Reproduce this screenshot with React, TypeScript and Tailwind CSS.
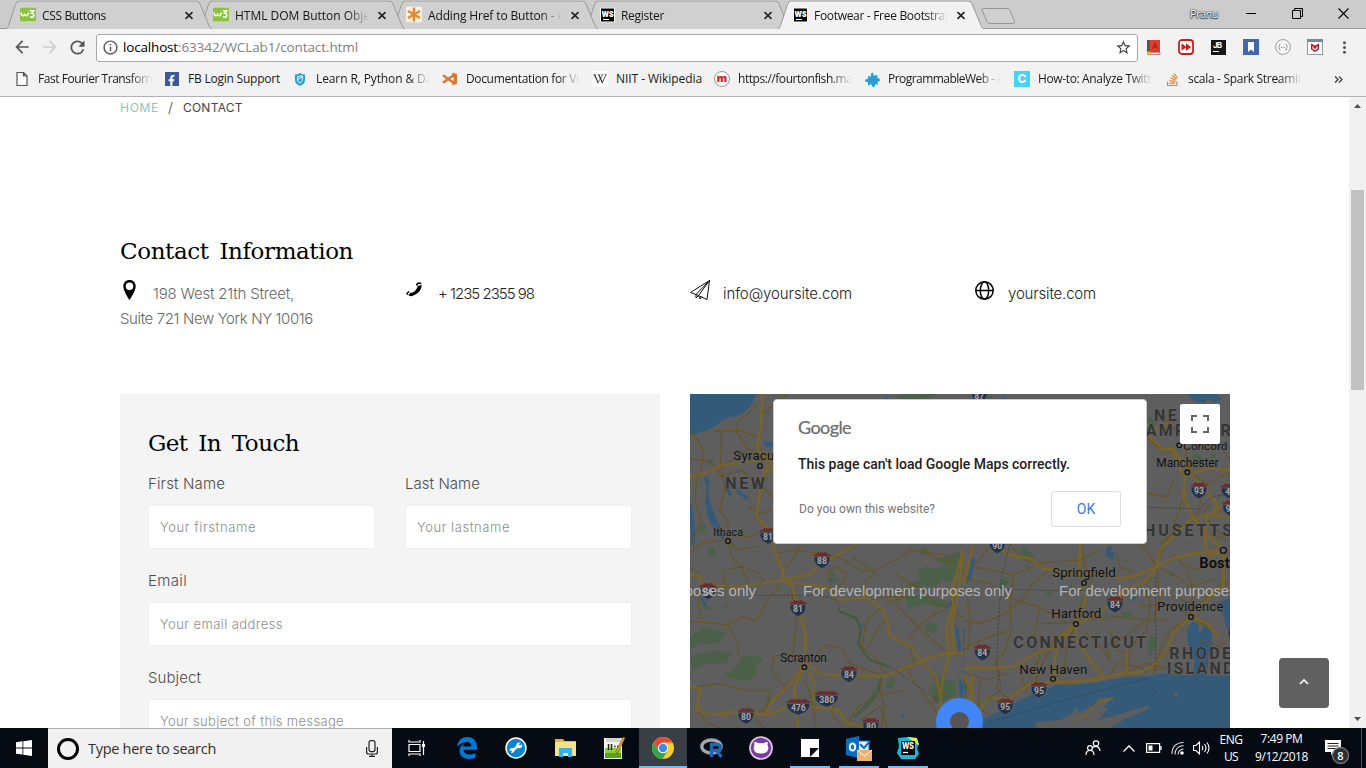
import { useLayoutEffect, useRef, useState } from "react";
import type { ReactNode } from "react";
import { FaFacebookF, FaGithubAlt, FaStackOverflow, FaWikipediaW } from "react-icons/fa";
import { MdArrowBack, MdArrowForward, MdInfoOutline, MdMoreVert, MdRefresh, MdStarBorder } from "react-icons/md";

/** Text that spreads its letters so that the run takes exactly `w` pixels. */
function Fit({ w, children, className = "" }: { w: number; children: string; className?: string }) {
  const ref = useRef<HTMLSpanElement>(null);
  const [spacing, setSpacing] = useState(0);
  useLayoutEffect(() => {
    const el = ref.current;
    if (el) setSpacing((w - el.getBoundingClientRect().width) / children.length);
  }, [w, children]);
  return (
    <span ref={ref} className={`inline-block shrink-0 whitespace-pre ${className}`} style={{ letterSpacing: spacing }}>
      {children}
    </span>
  );
}

const Faded = ({ children, className }: { children: ReactNode; className: string }) => (
  <div className={`flex shrink-0 items-center overflow-hidden [mask-image:linear-gradient(to_right,black_calc(100%-22px),transparent)] ${className}`}>
    {children}
  </div>
);

const W3 = () => (
  <svg width="16" height="14" viewBox="0 0 16 14">
    <rect width="16" height="14" rx="1" fill="#8ac43f" />
    <path d="M1 5q.3 3.300 2 3.300Q4.300 8.300 4.500 6q.3 2.300 1.800 2.300Q8 8.300 8.300 5M9.800 3.200h4l-2.300 2.600q2.500 0 2.300 2.300-.3 2.700-3.800 1.200" fill="none" stroke="#fff" strokeWidth="1.500" />
  </svg>
);

const Asterisk = () => (
  <svg width="16" height="16" viewBox="0 0 16 16">
    <rect width="16" height="16" fill="#fdf0e2" />
    <path d="M8 1v14M2 4.500l12 7M14 4.500l-12 7" stroke="#e8882a" strokeWidth="2.400" />
  </svg>
);

const WS = () => (
  <svg width="15" height="15" viewBox="0 0 15 15">
    <path d="M.5.500h14v14H.5z" fill="#000" stroke="#fff" />
    <text x="1.500" y="9" fontSize="8" fontWeight="900" fontFamily="Inter, sans-serif" textLength="12" lengthAdjust="spacingAndGlyphs" fill="#fff">WS</text>
    <path d="M3 12h6" stroke="#fff" strokeWidth="1.200" />
  </svg>
);

const tabs = [
  { title: "CSS Buttons", w: 64, icon: <W3 /> },
  { title: "HTML DOM Button Object", w: 145, icon: <W3 /> },
  { title: "Adding Href to Button - Co", w: 144, icon: <Asterisk /> },
  { title: "Register", w: 43, icon: <WS /> },
  { title: "Footwear - Free Bootstrap", w: 138, icon: <WS /> },
];

function Tab({ title, w, icon, index }: { title: string; w: number; icon: ReactNode; index: number }) {
  const active = index === 4;
  const layer = ["z-[5]", "z-[4]", "z-[3]", "z-[2]", "z-[6]"][index];
  return (
    <div className={`relative flex h-[29px] w-[193px] shrink-0 items-center pl-[14px] ${layer}`}>
      <svg className="absolute left-0 top-0" width="208" height="29" viewBox="0 0 208 29">
        <path
          d="M0 28.500Q1.500 28 2.500 25L9.500 4Q10.500 .5 13 .5H190Q193 .5 194 3.500L203 25Q204 28 206 28.500"
          fill={active ? "#f2f2f2" : "#d0d0d0"}
          stroke="#989898"
        />
      </svg>
      <span className="relative flex w-[16px] justify-center">{icon}</span>
      <Faded className="relative ml-[6px] h-[20px] w-[134px]">
        <Fit w={w} className="text-[12px] leading-[19px] text-[#141414]">{title}</Fit>
      </Faded>
      <svg className="relative ml-[9px] mt-px" width="8" height="8" viewBox="0 0 8 8">
        <path d="M.5.5l7 7M7.500.5l-7 7" stroke="#222" strokeWidth="1.700" />
      </svg>
    </div>
  );
}

const TitleBar = () => (
  <div className="flex h-[29px] shrink-0 items-center border-b border-[#989898] bg-[#ccc] pl-[6px]">
    <div className="flex h-[29px] translate-y-[0.5px]">
      {tabs.map((t, i) => (
        <Tab key={t.title} {...t} index={i} />
      ))}
    </div>
    <svg className="ml-[10px] mt-[3px]" width="36" height="18" viewBox="0 0 36 18">
      <path d="M1.500 1.500H26q2 0 3 2l4.500 11q.7 2-1.500 2H9q-2 0-3-2L1 3q-.5-1.500.5-1.500z" fill="#d0d0d0" stroke="#989898" />
    </svg>
    <Fit w={28} className="ml-[173px] text-[11px] leading-[16px] text-white [text-shadow:0_0_2px_#222,0_0_1px_#222,0_1px_1px_#333]">Pranu</Fit>
    <svg className="ml-[28px]" width="11" height="11" viewBox="0 0 11 11"><path d="M0 4.500h10" stroke="#000" /></svg>
    <svg className="ml-[35px] -mt-[2px]" width="11" height="11" viewBox="0 0 11 11">
      <path d="M.5 2.500h8v8h-8zM2.500 2.500v-2h8v8h-2" fill="none" stroke="#000" />
    </svg>
    <svg className="ml-[35px] -mt-[2px]" width="11" height="11" viewBox="0 0 11 11"><path d="M.5.500l10 10M10.500.5l-10 10" stroke="#000" strokeWidth="1.100" /></svg>
  </div>
);

const Extensions = () => (
  <div className="flex items-center">
    <svg className="ml-[8px]" width="15" height="17" viewBox="0 0 15 17">
      <path d="M1 1h3v14H1z" fill="#555" /><path d="M4 1h10v12H4z" fill="#e03d30" /><path d="M4 13.500h10v2H4z" fill="#fff" stroke="#a33" strokeWidth=".6" />
      <path d="M6.500 10L9 4l2.500 6M7.500 8h3" stroke="#a8201a" strokeWidth="1.200" fill="none" /><path d="M1 13l3-1 1 3-2 1.500-2-.5z" fill="#f3b51b" />
    </svg>
    <svg className="ml-[17px]" width="16" height="16" viewBox="0 0 16 16">
      <rect x="1" y="1" width="14" height="14" rx="3" fill="#fff" stroke="#c7201d" strokeWidth="1.800" />
      <path d="M3.500 4.200L8.500 8l-5 3.800zM8 4.200L13 8l-5 3.800z" fill="#c7201d" />
    </svg>
    <span className="ml-[17px] flex h-[15px] w-[15px] flex-col bg-[#161616] pl-[2px] pt-px font-[Inter,sans-serif] text-[8px] font-bold leading-[8px] text-white">
      <Fit w={11}>JB</Fit><span className="mt-[2px] h-px w-[6px] bg-white" />
    </span>
    <svg className="ml-[17px]" width="16" height="16" viewBox="0 0 16 16"><rect width="16" height="16" fill="#4267b2" /><path d="M5 3h6v10l-3-2.500L5 13z" fill="#fff" /></svg>
    <svg className="ml-[16px]" width="16" height="16" viewBox="0 0 16 16" fill="none" stroke="#999">
      <circle cx="8" cy="8" r="7.400" fill="#fafafa" />
      <path d="M5.500 5Q4.500 5 4.500 6T3.500 8Q4.500 8 4.500 10T5.500 11M10.500 5q1 0 1 1t1 2q-1 0-1 2t-1 1" /><path d="M6 8.500h4" strokeDasharray="1 .6" />
    </svg>
    <svg className="ml-[16px]" width="16" height="16" viewBox="0 0 16 16">
      <rect x=".5" y=".5" width="15" height="15" fill="#fff" stroke="#8b9aa0" /><path d="M0 0h16v3H0z" fill="#6e8e99" />
      <path d="M4 4.500l4 2 4-2v6L8 13l-4-2.500z" fill="#c3192b" /><path d="M6 7.500v2l2 1 2-1v-2" stroke="#fff" strokeWidth="1.200" fill="none" />
    </svg>
    <MdMoreVert className="ml-[12px]" size={19} color="#5a5a5a" />
  </div>
);

const Toolbar = () => (
  <div className="flex h-[36px] shrink-0 items-center bg-[#f2f2f2] pl-[12px]">
    <MdArrowBack size={20} color="#555" />
    <MdArrowForward className="ml-[8px]" size={20} color="#ccc" />
    <MdRefresh className="ml-[7px]" size={21} color="#555" />
    <div className="ml-[8px] mt-[1px] flex h-[28px] w-[1042px] shrink-0 items-center rounded-[3px] border border-[#a8a8a8] bg-white pl-[5px]">
      <MdInfoOutline size={17} color="#555" />
      <Fit w={55} className="ml-[4px] pb-px text-[13.500px] leading-[18px] text-black">localhost</Fit>
      <Fit w={180} className="pb-px text-[13.500px] leading-[18px] text-[#808080]">:63342/WCLab1/contact.html</Fit>
      <MdStarBorder className="ml-auto mr-[5px]" size={17} color="#444" />
    </div>
    <Extensions />
  </div>
);

const bookmarks: { label: string; w: number; icon: ReactNode; pl: string; box: string; fade?: boolean }[] = [
  { label: "Fast Fourier Transform", w: 118, pl: "w-[150px]", box: "w-[114px]", fade: true, icon: <svg width="12" height="14" viewBox="0 0 12 14"><path d="M1 .5h6.500L11 4v9.500H1zM7.500.5V4H11" fill="#fff" stroke="#555" strokeWidth="1.200" /></svg> },
  { label: "FB Login Support", w: 92, pl: "w-[128px]", box: "w-[94px]", icon: <span className="flex h-[14px] w-[14px] items-end justify-end bg-[#3b5998] pr-[2px]"><FaFacebookF size={11} color="#fff" /></span> },
  { label: "Learn R, Python & Data", w: 127, pl: "w-[150px]", box: "w-[114px]", fade: true, icon: <svg width="12" height="13" viewBox="0 0 13 14"><path d="M6.500 0Q9 2 12 1.500V7q0 5-5.500 7Q1 12 1 7V1.500Q4 2 6.500 0z" fill="#27a4cf" /><path d="M4 4l5-1v5l-2.500 3L4 9zM4 7l5-3" stroke="#fff" fill="none" /></svg> },
  { label: "Documentation for Visual", w: 134, pl: "w-[150px]", box: "w-[114px]", fade: true, icon: <svg width="17" height="16" viewBox="0 0 17 16"><path d="M1 4l12 8.500M1 12L13 3.500" stroke="#dc7433" strokeWidth="2.500" /><path d="M11 1l5 2v10l-5 2z" fill="#dc7433" /><path d="M12.500 5.500L9.500 8l3 2.500z" fill="#f2f2f2" /></svg> },
  { label: "NIIT - Wikipedia", w: 86, pl: "w-[122px]", box: "w-[88px]", icon: <span className="flex h-[16px] w-[16px] items-center justify-center rounded-[3px] bg-white"><FaWikipediaW size={14} color="#222" /></span> },
  { label: "https://fourtonfish.matt", w: 122, pl: "w-[150px]", box: "w-[114px]", fade: true, icon: <span className="flex h-[16px] w-[16px] items-center justify-center rounded-full border border-[#999] bg-white pb-px font-[Inter,sans-serif] text-[11px] font-black leading-none text-[#e01f25]">m</span> },
  { label: "ProgrammableWeb - A", w: 116, pl: "w-[150px]", box: "w-[112px]", fade: true, icon: <svg width="15" height="15" viewBox="0 0 15 15"><path d="M3 4l3 .5Q5.500 1 7.500.5 9 1 8.500 4L12 2.500l.5 3.500Q15 6 15 8t-2.500 1.500L13 13l-3-1q.3 3-1.500 3T6.500 12L3 13.500V10Q0 10.500 0 8.500T3 7z" fill="#2b9fd4" /></svg> },
  { label: "How-to: Analyze Twitter", w: 124, pl: "w-[150px]", box: "w-[114px]", fade: true, icon: <span className="flex h-[16px] w-[16px] items-center justify-center bg-[#44d3fa] font-[Inter,sans-serif] text-[12px] font-extrabold leading-none text-white">C</span> },
  { label: "scala - Spark Streaming", w: 123, pl: "w-[150px]", box: "w-[114px]", fade: true, icon: <FaStackOverflow size={15} color="#e8812e" /> },
];

const Bookmarks = () => (
  <div className="flex h-[32px] shrink-0 items-center border-b border-[#b2b2b2] bg-[#f2f2f2] pb-[4px] pl-[14px] pt-px text-[12px] leading-[18px] text-[#1a1a1a]">
    {bookmarks.map((b) => (
      <div key={b.label} className={`flex shrink-0 items-center ${b.pl}`}>
        <span className="mr-[8px] flex w-[16px] shrink-0 items-center justify-center">{b.icon}</span>
        {b.fade ? <Faded className={`h-[18px] ${b.box}`}><Fit w={b.w}>{b.label}</Fit></Faded> : <Fit w={b.w}>{b.label}</Fit>}
      </div>
    ))}
    <svg className="ml-[20px] mt-px" width="9" height="7" viewBox="0 0 9 7"><path d="M1 .5l3 3-3 3M5 .5l3 3-3 3" fill="none" stroke="#444" strokeWidth="1.400" /></svg>
  </div>
);

function Shield({ x, y, n }: { x: number; y: number; n: string }) {
  const wide = n.length > 2;
  const h = wide ? 35 : 24;
  return (
    <g transform={`translate(${x} ${y})`}>
      <path d={`M${-h} -18q8 4 12-6q12 5 ${h - 12} 0q${h - 24} 5 ${h - 12} 0q4 10 12 6v12h${-2 * h}z`} fill="#682e2d" />
      <path d={`M${-h} -10H${h}Q${h + 3} 14 0 26Q${-h - 3} 14 ${-h} -10z`} fill="#25324a" stroke="#6a6a6a" strokeWidth="2" />
      <text y="12" textAnchor="middle" fontSize="26" fontWeight="700" fill="#a8a8a8">{n}</text>
    </g>
  );
}

function City({ x, y, w, t, s = 40, dx, dy, bold }: { x: number; y: number; w: number; t: string; s?: number; dx: number; dy: number; bold?: boolean }) {
  return (
    <g>
      <text x={x} y={y} fontSize={s} textLength={w} fontWeight={bold ? 700 : 400} fill="#0f0f0f" stroke="#666" strokeWidth="3" paintOrder="stroke">{t}</text>
      <circle cx={dx} cy={dy} r={bold ? 9 : 7} fill="#666" stroke="#111" strokeWidth="4" />
    </g>
  );
}

const Region = ({ x, y, w, t }: { x: number; y: number; w: number; t: string }) => (
  <text x={x} y={y} fontSize="48" fontWeight="700" textLength={w} fill="#343434" stroke="#686868" strokeWidth="3" paintOrder="stroke">{t}</text>
);

const WestHalf = () => (
  <g transform="translate(-2 -4) scale(.33333)">
    <g fill="#335a78">
      <path d="M0 12H203L196 38Q168 78 135 80Q110 82 90 102Q60 122 38 126L0 137z" />
      <path d="M48 265l12-4 4 15-3 44 10 30 20 50 20 42-8 8-26-32-18-40-8-48 6-30zM4 340l8 2 5 50 6 40-4 40-8-10-4-60-4-30zM105 275l12 4 14 34-6 6-14-20zM140 285l14 14 28 24-6 8-28-22zM225 152l30 4v14l-22 0zM800 700l12 20 8 60-6 20-8-50zM812 860l14 20v60l-12-30z" />
      <path d="M590 20l12 6-14 8zM520 700l8 6-6 10zM768 650l30-25 15 4-38 28zM35 622l12 4 12 28-14-8zM425 565l14 5-10 10zM640 970l8 4-3 15zM80 120l10 2v12z" />
    </g>
    <g fill="#4b6048">
      <path d="M688 545l28-18 20 12 34-8 34 20-12 24-36-5-14 22-38-8-34 16-12-22 36-6zM745 510l28-12 52 20v35l-35-12zM655 620l50-8 70 20-12 22-50-12-55 14zM708 708l20-10 22 8-8 22-30-4zM5 740l45-30 65 20-20 28-55 5-35 15zM8 800l70-20 52 10-15 30-60 0-44 22zM110 850l30-10 20-40 50-5 14 16-24 20 10 16-34 28-52-10zM40 640l30 14-14 8zM56 480l22-10 4 20-16 10zM35 410l16-6 2 20-16 8zM55 215l22-10-6 20zM725 895l30-30 45 8 6 40-40 20-24 8zM495 985l45-55 40-70 4 24-34 60-46 40zM595 880l18-18 12 14-12 18-20 0zM620 20l50-8h80l-30 14-70 2zM700 470l20 8-10 20-16-8zM780 500l30-18 20 10v30z" />
      <path d="M110 640l20 10-30 8zM240 905l18 30-25 12zM420 540l20 5 12 30-12 8z" opacity=".7" />
      <path d="M455 665L505 685 520 720 510 760 545 810 605 830" fill="none" stroke="#4b6048" strokeWidth="9" />
    </g>
    <g fill="none" stroke="#67551f" strokeWidth="3.500" strokeLinejoin="round">
      <path d="M205 42L180 72 150 95 145 125 200 205M84 122H160L220 145M100 125L98 220 110 300 95 360 120 395 120 450M0 205L70 215 100 260 160 240 190 265 215 300M10 120L48 185 40 240 25 275 22 330 40 400 0 475M120 450L40 460 0 490M120 450L150 480 205 470M120 450L130 500 160 530 180 575M105 540L165 530 215 552 230 575M105 540L112 590 150 605M40 590L30 640 40 690M0 695L90 700 120 705 165 680 205 695 240 625 275 590M310 600L325 690 315 800M300 12L225 70M262 490L320 480 400 490 470 510 520 545 560 540 630 505 670 480 800 500M285 545L320 500 335 470M430 600L420 550 440 530 475 550 470 575 430 600M530 620L525 580 560 550 520 520 490 500M580 650L535 690 522 770 560 800 590 850M620 550L660 575 650 620 590 640M825 600L770 650 740 640 700 590 660 580M825 680L760 660 700 700 660 750M780 790L700 720 620 640M590 690L560 730 540 775M670 770L670 800 690 825M380 820L385 790 420 765 465 780 485 820 520 835 580 855M350 820L300 790 255 800 250 840 280 880 300 890M580 860L575 900 590 950 580 1014M660 830L675 870 720 930 760 990M700 810L735 850 755 900 730 940M600 1014L575 950 520 990M350 870L370 920 385 1014M440 930L430 970 470 1014M25 960L60 1000 100 1014M200 985L230 1014M120 705L150 760 150 800M0 530L35 550M180 350L215 370 250 360M225 180L180 180 100 230M545 630L600 620 665 620M700 470L730 500 800 520M225 290L255 320M240 420L180 440 150 440M30 890L90 880 170 900 250 900M250 910L230 960 170 985M480 1000L510 950 560 920 650 900" />
    </g>
    <g fill="none" stroke="#78642b" strokeWidth="8" strokeLinejoin="round" strokeLinecap="round">
      <path d="M225 12L217 120 207 175 238 225 218 300 205 380 240 420 262 490 286 545 282 570 310 585 330 640 345 700 353 745 350 820" />
      <path d="M0 260L50 248 100 226 185 215 260 200M225 190L260 235 230 250 215 280M282 570L370 550 402 520 500 465M0 555L38 560 42 580 150 592 195 584 280 572 340 580 415 592 450 632 490 625 535 622 580 655 600 695 600 735 670 770 700 815 745 860 755 910" strokeWidth="7" />
      <path d="M350 820L400 852 440 856 500 855 585 860 660 830 720 805 780 790 825 790M0 888L38 898 25 960 70 974 170 965 240 975 300 950 360 950 450 960 480 1000 570 1014M350 820L300 890 255 930 230 975M365 850L380 890 375 930M350 830L320 890 325 960 330 1014" />
      <path d="M828 470L795 590 795 650 775 710 785 790 765 860 755 960M828 480L805 640 790 710 800 790" />
    </g>
    <path d="M200 616H400L450 632 455 665 505 685 520 720 510 760 545 810 605 830 750 930M580 860L570 910 500 980" fill="none" stroke="#363636" strokeWidth="2" strokeDasharray="7 5" />
    <Shield x={240} y={437} n="81" /><Shield x={402} y={510} n="88" /><Shield x={60} y={603} n="86" />
    <Shield x={330} y={654} n="81" /><Shield x={483} y={852} n="84" /><Shield x={174} y={977} n="80" />
    <Shield x={331} y={950} n="476" /><Shield x={416} y={926} n="380" /><Shield x={549} y={1007} n="80" />
    <City x={136} y={209} w={166} t="Syracuse" dx={216} dy={228} />
    <City x={76} y={438} w={89} t="Ithaca" s={32} dx={120} dy={453} />
    <City x={277} y={816} w={140} t="Scranton" s={36} dx={349} dy={832} />
    <Region x={112} y={298} w={118} t="NEW" />
  </g>
);

const EastHalf = () => (
  <g transform="translate(270 -4) scale(.33333)">
    <g fill="#335a78">
      <path d="M12 1014L40 1000 70 988 125 960 195 925 240 905 290 885 340 884 400 880 445 870 500 862 570 858 620 850 700 858 830 855V1014z" />
      <path d="M680 720l18-25 16 10 4 30 12-25 16-10 8 30 4 50-12 10-6 70-45 0 10-45-16-24zM680 12l24 22 30 4 10-14 22 14 20-10-18-16zM440 475l15-10-2 22 14 0-8 22-20-10zM770 640l40-15v80l-10 10-10-40zM0 700l14 20-4 90 12 80-10 20zM35 500l12 10-14 60-14 10 12-50zM515 620l14 0-8 20zM330 580l10 15-8 10zM790 340l10 10-10 20zM120 30l14-12-4 18z" />
    </g>
    <g fill="#5e5e5e">
      <path d="M225 1014L228 995 300 990 330 975 345 960 352 950 358 970 385 955 380 945 398 950 415 925 460 922 430 950 445 955 415 990 470 975 520 960 570 945 560 960 500 985 450 1014zM640 918l8-20 8 22zM412 950l14-12 8 8-12 20z" />
    </g>
    <g fill="#4b6048">
      <path d="M565 80l14 5 10 30-12 5-12-15zM695 200l15-12 14 16 14 4-18 20-14-10zM180 490l14-20 28 25-4 20-20 5zM190 520l22 10-4 16zM575 735l15 10v30l-16 10-14-14zM562 780l14 5-6 14zM635 850l20-5-4 20zM120 570l16-10 10 20-16 18-12-5zM488 665l28 5-10 14-18-4zM75 18l14-8 10 20zM750 190l18 4-10 20zM255 605l20 0-10 16zM155 745l12 5-8 15zM490 510l16-6 4 14zM625 545l20 6-12 12zM225 810l14 6-10 8z" />
    </g>
    <g fill="none" stroke="#67551f" strokeWidth="3.500" strokeLinejoin="round">
      <path d="M150 462L180 500 230 520 290 515 360 510 420 480M90 470L40 530 110 545 160 555 220 530M0 540L30 570 90 580 140 620 200 640 240 650 320 700M0 690L60 700 120 680 175 640 220 580 270 540M240 650L225 720 220 770 240 800 210 860M160 555L150 640 155 720 130 790 95 840M0 790L40 760 90 740 150 720M140 850L80 870 20 850M347 702L280 750 260 800 230 850 230 880M347 702L320 770 310 850 280 865M370 720L430 780 450 810 440 770 480 750 560 690 620 690M450 720L470 780 510 800 500 860M560 580L570 650 560 720 520 760 500 800M590 530L560 480 540 462M590 530L610 470 640 420M590 530L600 620 580 690M590 530L650 560 690 590 760 570M640 490L680 540 700 600 690 680M580 565L500 600 440 640M700 380L640 430 600 460M700 390L740 430 800 450M640 410L650 380 670 320M560 140L600 180 650 190M610 70L630 110 660 130M720 160L780 170 825 230M690 250L740 280 825 240M740 280L720 340 710 380M640 270L620 320 560 310M670 130L680 200 690 250M750 340L730 370 760 410 790 440M660 520L720 540 790 510 825 480M825 570L770 590 740 620 700 680M692 680L650 650 600 640 540 650M692 680L630 720 600 780 580 850M692 680L740 710 780 740M825 730L780 770 720 750M640 840L560 820 500 850M560 850L540 830 470 820 450 860M20 600L30 700 25 780M0 830L20 900 0 960M60 870L55 950 80 970M120 840L110 890 140 925M520 545L480 530 470 490M400 560L360 650 347 702M360 462L375 510 370 580M240 700L320 700 380 690 470 680 560 690M180 850L200 900M560 620L620 610 690 640" />
    </g>
    <g fill="none" stroke="#78642b" strokeWidth="8" strokeLinejoin="round" strokeLinecap="round">
      <path d="M110 470L150 495 210 505 250 535 300 545 370 555 420 550 480 565 520 560 590 530 640 505 700 490 790 482" />
      <path d="M360 462L358 530 372 580 375 640 347 702 300 740 285 800 280 865M347 702L390 685 440 650 500 600 560 570 590 530" />
      <path d="M20 988L60 960 90 920 140 930 175 905 215 880 280 875 350 875 430 865 480 850 540 848 590 820 620 780 640 730 692 680 740 630 790 590 790 490" />
      <path d="M0 840L45 830 75 835 160 830 230 790 290 770 347 702M347 702L350 750 390 810 430 860M500 790L500 850M620 100L600 120 560 105M640 190L660 240 675 260 670 320 690 360 700 385 750 440 790 480M690 250L735 300 770 340 760 370 690 390 600 480 590 530M760 370L790 340 825 320M740 380L735 470 750 500 790 482M825 380L750 375M560 130L610 180 645 175M610 178L640 180 690 245M690 250L760 235 825 240M692 680L740 700 775 740M8 850L35 905 25 950 20 1000M0 960L50 980" />
      <path d="M345 990L380 975 410 940 460 925" strokeWidth="6" opacity=".7" />
      <path d="M40 470L20 540 0 620M35 860L40 970" />
    </g>
    <path d="M150 462L125 560 115 700 110 830 125 900 80 930M130 598L290 602 590 598M560 352L720 357 755 320 825 310M587 560L587 850M90 995L280 940 555 866 590 912" fill="none" stroke="#363636" strokeWidth="2" strokeDasharray="7 5" />
    <Shield x={58} y={14} n="87" /><Shield x={112} y={465} n="90" /><Shield x={717} y={301} n="93" />
    <Shield x={818} y={304} n="495" /><Shield x={812} y={354} n="95" /><Shield x={465} y={643} n="84" />
    <Shield x={67} y={787} n="84" /><Shield x={237} y={899} n="95" /><Shield x={136} y={949} n="95" /><Shield x={828} y={732} n="95" />
    <Region x={582} y={92} w={118} t="NEW" />
    <Region x={516} y={139} w={330} t="HAMPSHIRE" />
    <Region x={471} y={438} w={345} t="ACHUSETTS" />
    <Region x={160} y={774} w={398} t="CONNECTICUT" />
    <Region x={628} y={806} w={185} t="RHODE" />
    <Region x={620} y={853} w={200} t="ISLAND" />
    <City x={670} y={181} w={132} t="Concord" s={35} dx={658} dy={166} />
    <City x={589} y={230} w={187} t="Manchester" s={36} dx={682} dy={247} />
    <City x={277} y={561} w={190} t="Springfield" dx={372} dy={579} />
    <City x={274} y={683} w={150} t="Hartford" dx={348} dy={702} />
    <City x={178} y={851} w={204} t="New Haven" dx={279} dy={867} />
    <City x={592} y={662} w={198} t="Providence" s={39} dx={693} dy={681} />
    <City x={718} y={534} w={140} t="Boston" s={44} dx={790} dy={481} bold />
  </g>
);

const MapPanel = () => (
  <div className="relative h-[334px] w-[540px] shrink-0 overflow-hidden bg-[#5e5e5e] font-[Roboto,sans-serif] font-normal">
    <svg width="540" height="334" viewBox="0 0 540 334">
      <EastHalf />
      <svg width="273" height="334" viewBox="0 0 273 334"><rect width="273" height="334" fill="#5e5e5e" /><WestHalf /></svg>
      <g fill="#b4b4b4" fontFamily="Liberation Sans, Arial, sans-serif" fontSize="15">
        <text x="-143" y="202" textLength="209">For development purposes only</text>
        <text x="113" y="202" textLength="209">For development purposes only</text>
        <text x="369" y="202" textLength="209">For development purposes only</text>
      </g>
      <circle cx="269.500" cy="327.500" r="16.500" fill="#555" stroke="#4285f4" strokeWidth="14" />
    </svg>
    <div className="absolute left-[83px] top-[5px] flex h-[145px] w-[374px] flex-col rounded-[4px] border border-[#ccc] bg-white pl-[24px] pr-[25px] pt-[16px]">
      <Fit w={53} className="self-start font-[Lato,sans-serif] text-[18px] leading-[22px] text-[#6b6b6b] [-webkit-text-stroke:0.2px_#6b6b6b]">Google</Fit>
      <Fit w={272} className="mt-[16px] self-start text-[14px] font-medium leading-[20px] text-[#212121]">This page can't load Google Maps correctly.</Fit>
      <div className="mt-[17px] flex items-center justify-between">
        <Fit w={136} className="ml-px text-[12px] leading-[16px] text-[#757575]">Do you own this website?</Fit>
        <button className="flex h-[36px] w-[70px] items-center justify-center rounded-[3px] border border-[#dcdcdc] text-[14px] text-[#3b78e7]">OK</button>
      </div>
    </div>
    <div className="absolute left-[490px] top-[10px] flex h-[40px] w-[40px] items-center justify-center rounded-[2px] bg-white">
      <svg width="18" height="18" viewBox="0 0 18 18"><path d="M1 6V1h5M12 1h5v5M17 12v5h-5M6 17H1v-5" fill="none" stroke="#666" strokeWidth="2" /></svg>
    </div>
  </div>
);

const contacts: { text: string; w: number; dark?: boolean; icon: ReactNode }[] = [
  { text: "198 West 21th Street,", w: 141, icon: <svg width="20" height="20" viewBox="0 0 20 20"><path fillRule="evenodd" d="M9.500 0C5.800 0 3.300 2.700 3.300 6.200 3.300 11 9.500 20 9.500 20S15.700 11 15.700 6.200C15.700 2.700 13.200 0 9.500 0zm0 2.500a3.800 3.800 0 1 1 0 7.600 3.800 3.800 0 0 1 0-7.600z" /></svg> },
  { text: "+ 1235 2355 98", w: 96, dark: true, icon: <svg width="20" height="20" viewBox="0 0 20 20"><path d="M13 5.500q2.500.5 3.500-1 .5 4.500-3.500 8.300-4.500 4-8.200 3.200-1-.2-1.600-1.200 1.800-.3 2.300-2.300 2 .7 4.500-1.600Q12.500 8.500 13 5.500z" /><path d="M11.800 5.500q0-2.500 2.500-2.500 1 0 1.700.8M4.200 11.500l-2.200 1.700q.3 1 .8 1.300" stroke="#000" strokeWidth="1.500" fill="none" /></svg> },
  { text: "info@yoursite.com", w: 129, dark: true, icon: <svg width="20" height="20" viewBox="0 0 20 20"><path d="M19.500.5L.5 12.500l5.500 2L17 19.500zM19.500.5L6 14.500M19.500.5L8.500 15.500M6 14.500V18l2.500-2.500L10 19l2-2.500" fill="none" stroke="#111" /></svg> },
  { text: "yoursite.com", w: 88, dark: true, icon: <svg width="20" height="20" viewBox="0 0 20 20"><g fill="none" stroke="#000" strokeWidth="1.500"><circle cx="9.500" cy="10.500" r="8.700" /><ellipse cx="9.500" cy="10.500" rx="4.200" ry="8.700" /><path d="M.8 10.500h17.400" /></g></svg> },
];

const Field = ({ label, w, hint, hw }: { label: string; w: number; hint: string; hw: number }) => (
  <div className="flex flex-1 flex-col">
    <Fit w={w} className="self-start text-[15px] leading-[20px] text-[#4d4d4d]">{label}</Fit>
    <div className="mt-[11px] flex h-[44px] items-center rounded-[2px] border border-[#f0f0f0] bg-white pl-[11px]">
      <Fit w={hw} className="text-[13px] leading-[20px] text-[#8d8d8d]">{hint}</Fit>
    </div>
  </div>
);

const Page = () => (
  <div className="flex h-[631px] shrink-0 overflow-hidden bg-white">
    <div className="relative flex h-full w-[1349px] flex-col pl-[120px] font-[Inter,sans-serif] font-light">
      <div className="flex h-[22px] items-center text-[12px] leading-[20px] font-normal text-[#444]">
        <Fit w={39} className="text-[#88c8bc]">HOME</Fit>
        <span className="ml-[9px] text-[14px] font-light">/</span>
        <Fit w={60} className="ml-[10px]">CONTACT</Fit>
      </div>
      <Fit w={233} className="mt-[116px] self-start font-['DejaVu_Serif',serif] text-[23px] leading-[32px] text-black [word-spacing:4px]">Contact Information</Fit>
      <div className="mt-[12px] flex h-[115px] w-[1140px] text-[15px] leading-[25px]">
        {contacts.map((c, i) => (
          <div key={c.text} className="w-[285px]">
            <div className="flex h-[27px]">
              <span className="w-[33px] pt-px">{c.icon}</span>
              <Fit w={c.w} className={`pt-[2px] ${c.dark ? "text-[#222]" : "text-[#666]"}`}>{c.text}</Fit>
            </div>
            {i === 0 && <Fit w={193} className="text-[#666]">Suite 721 New York NY 10016</Fit>}
          </div>
        ))}
      </div>
      <div className="flex gap-[30px]">
        <div className="flex h-[334px] w-[540px] shrink-0 flex-col overflow-hidden bg-[#f4f4f4] px-[28px] pt-[34px]">
          <Fit w={151} className="self-start font-['DejaVu_Serif',serif] text-[23px] leading-[30px] text-black [word-spacing:4px]">Get In Touch</Fit>
          <div className="mt-[16px] flex h-[97px] shrink-0 gap-[30px]">
            <Field label="First Name" w={77} hint="Your firstname" hw={96} />
            <Field label="Last Name" w={75} hint="Your lastname" hw={93} />
          </div>
          <div className="flex h-[97px] shrink-0"><Field label="Email" w={39} hint="Your email address" hw={123} /></div>
          <div className="flex h-[97px] shrink-0"><Field label="Subject" w={53} hint="Your subject of this message" hw={184} /></div>
        </div>
        <MapPanel />
      </div>
      <div className="absolute left-[1279px] top-[561px] flex h-[50px] w-[50px] items-center justify-center rounded-[4px] bg-[#606060]">
        <svg width="10" height="6" viewBox="0 0 10 6" className="-mt-[3px]"><path d="M1 5l4-4 4 4" fill="none" stroke="#fff" strokeWidth="1.700" /></svg>
      </div>
    </div>
    <div className="flex h-full w-[17px] shrink-0 flex-col items-center bg-[#f1f1f1] py-[7px]">
      <svg width="7" height="4" viewBox="0 0 7 4"><path d="M0 4L3.500 0 7 4z" fill="#505050" /></svg>
      <div className="mt-[82px] h-[200px] w-[13px] bg-[#c1c1c1]" />
      <svg className="mt-auto" width="7" height="4" viewBox="0 0 7 4"><path d="M0 0l3.500 4L7 0z" fill="#505050" /></svg>
    </div>
  </div>
);

const apps: { name: string; open?: boolean; full?: boolean; icon: ReactNode }[] = [
  { name: "edge", icon: <svg width="20" height="22" viewBox="0 0 20 22"><path d="M0 9.800Q1.500 0 10.500 0 20 .5 20 10.500v2.300H6.500q.3 4.700 6 4.700 3.300 0 6-1.600v4.500Q15.500 22 11.500 22 3 21.500 2.500 14q-.2-4.500 4.500-7.500-.9 1.300-.9 3h8.300q0-4.500-4.500-4.500Q4.500 5 0 9.800z" fill="#0078d7" /></svg> },
  { name: "wrench", icon: <svg width="22" height="22" viewBox="0 0 22 22"><circle cx="11" cy="11" r="10" fill="#0a84d0" stroke="#fff" strokeWidth="1.500" /><path d="M7.500 13.500L14 8.500" stroke="#fff" strokeWidth="2.600" strokeLinecap="round" /><circle cx="7" cy="13.500" r="2.400" fill="#fff" /><circle cx="14.200" cy="8.300" r="2.900" fill="#fff" /><path d="M14.500 8l3-2.500M6.500 14l-2.500 2" stroke="#0a84d0" strokeWidth="1.800" /></svg> },
  { name: "folder", icon: <svg width="23" height="20" viewBox="0 0 23 20"><path d="M1 1h8l1.500 2H22v15H1z" fill="#e8b530" /><path d="M1 4h21v14H1z" fill="#fbe08a" /><path d="M5 10h13v9h-4v-4H9v4H5z" fill="#35b2e8" /></svg> },
  { name: "notepad", icon: <svg width="23" height="24" viewBox="0 0 23 24"><path d="M1 2h18v21H1z" fill="#f4f4ee" /><path d="M2 12h16v10H2z" fill="#8fcf3a" /><path d="M2 17h16v5H2z" fill="#4fa51c" /><path d="M3 5h14M3 3h14" stroke="#b3b3a5" /><path d="M5.500 8v6M8.500 8v6M11 10.500h1.500M14 10.500h1.500" stroke="#222" strokeWidth="1.500" /><path d="M20 1l2 1-7 14-2 1.500V15z" fill="#e8a33a" stroke="#7e5217" strokeWidth=".6" /></svg> },
  { name: "chrome", open: true, full: true, icon: <svg width="22" height="22" viewBox="0 0 22 22"><circle cx="11" cy="11" r="11" fill="#f8ce31" /><path d="M1.500 5.500A11 11 0 0 1 20.500 5.500H11L6.300 13.500z" fill="#e5493a" /><path d="M1.500 5.500A11 11 0 0 0 10.500 22L15.700 13.500 6.300 13.500z" fill="#2ea44f" /><circle cx="11" cy="11" r="5.200" fill="#fff" /><circle cx="11" cy="11" r="4.200" fill="#4389f5" /></svg> },
  { name: "r", icon: <svg width="24" height="20" viewBox="0 0 24 20"><ellipse cx="11.500" cy="8.500" rx="9.700" ry="6.500" fill="none" stroke="#a3a7ae" strokeWidth="3.300" /><path d="M11.500 19V6.500h5.500q3.500 0 3.500 3t-3.500 3h-5M16.500 12.500L21.500 19" fill="none" stroke="#2166b8" strokeWidth="3.300" /></svg> },
  { name: "github", icon: <svg width="24" height="24" viewBox="0 0 24 24"><circle cx="12" cy="12" r="11" fill="#7b3b98" stroke="#dcc9e4" strokeWidth="1.700" /><path d="M5.500 6q2.500 0 4 1.200h5Q16 6 18.500 6q.5 1.500 0 3.300 1.200 1.500.7 4Q18.500 17.500 12 17.500T4.800 13.300q-.5-2.500.7-4Q5 7.500 5.500 6z" fill="#fff" /></svg> },
  { name: "note", open: true, icon: <svg width="18" height="18" viewBox="0 0 18 18"><path d="M0 0h18v18H0z" fill="#fff" /><path d="M9 9h9l-9 9z" fill="#0a0f18" /></svg> },
  { name: "outlook", open: true, icon: <svg width="26" height="26" viewBox="0 0 26 26"><path d="M12 6h11v12H12z" fill="#e8f2fb" stroke="#0b6ec3" /><path d="M14 9l4 4 6-7" stroke="#0b6ec3" strokeWidth="2" fill="none" /><path d="M0 4l13-3v22L0 20z" fill="#0b6ec3" /><ellipse cx="6.500" cy="12" rx="2.700" ry="3.600" fill="none" stroke="#fff" strokeWidth="2" /><path d="M11 15h15v11H11z" fill="#edb26b" /><path d="M11 15l7.500 6 7.500-6" stroke="#fff" fill="none" /></svg> },
  { name: "webstorm", open: true, icon: <svg width="24" height="24" viewBox="0 0 24 24"><path d="M2 2l10-1 8 1 3 6-2 4 2 6-4 5H5L1 17l2-6z" fill="#18b8d6" /><path d="M11 1l10 1 2 7-5-3z" fill="#e8ec4a" /><path d="M5 5h14v14H5z" fill="#000" /><path d="M7 16.500h5" stroke="#fff" strokeWidth="1.300" /><text x="6" y="13" fontSize="8.500" fontWeight="800" fontFamily="Inter, sans-serif" textLength="12" lengthAdjust="spacingAndGlyphs" fill="#fff">WS</text></svg> },
];

const Tray = () => (
  <div className="ml-auto flex h-full items-center text-white">
    <svg width="16" height="16" viewBox="0 0 16 16" fill="none" stroke="#fff" strokeWidth="1.200"><circle cx="11" cy="3.500" r="2.700" /><circle cx="5" cy="8" r="2.400" /><path d="M1 15q0-4.500 4-4.500T9 15M8 7.500q3-2.500 5.500 0 1.500 1.500 1.500 3.500" /></svg>
    <svg className="ml-[22px]" width="12" height="7" viewBox="0 0 12 7"><path d="M.5 6.500L6 1l5.500 5.500" fill="none" stroke="#fff" strokeWidth="1.400" /></svg>
    <svg className="ml-[11px]" width="16" height="10" viewBox="0 0 16 10"><path d="M.6.600h13v8.800h-13zM15 3v4" fill="none" stroke="#fff" strokeWidth="1.200" /><path d="M2.500 2.500h4v5h-4z" fill="#fff" /></svg>
    <svg className="ml-[9px]" width="14" height="14" viewBox="0 0 14 14"><path d="M1 13Q1 2 12.500 1.500M4 13.500Q4 5.500 12.500 4.500M7 13.500Q7.500 8.500 12.500 8" fill="none" stroke="#ddd" strokeWidth="1.100" /><circle cx="11" cy="12" r="1.800" fill="#fff" /></svg>
    <svg className="ml-[8px]" width="17" height="14" viewBox="0 0 17 14"><path d="M.6 4.500H3L6.500 1v12L3 9.500H.6zM9 5q1.500 2 0 4M11.500 3q3 4 0 8M14 1.500q4 5.500 0 11" fill="none" stroke="#fff" strokeWidth="1.100" /></svg>
    <div className="ml-[9px] flex w-[24px] flex-col items-center text-[12px] leading-[17px]"><Fit w={23}>ENG</Fit><Fit w={14}>US</Fit></div>
    <div className="ml-[12px] flex w-[53px] flex-col items-center text-[12px] leading-[17px]"><Fit w={42} className="-translate-y-px">7:49 PM</Fit><Fit w={53}>9/12/2018</Fit></div>
    <svg className="ml-[16px] mr-[12px] mt-[6px]" width="25" height="25" viewBox="0 0 25 25"><path d="M1 1h16v12H10l-3 3v-3H1z" fill="#fff" /><path d="M3.500 4.500h11M3.500 7h11M3.500 9.500h8" stroke="#222" /><circle cx="16.500" cy="16.500" r="8" fill="#2b2e33" stroke="#777" strokeWidth="1.300" /><text x="16.500" y="20.500" textAnchor="middle" fontSize="11" fontWeight="600" fill="#fff">8</text></svg>
    <span className="mr-[4px] h-full w-px bg-[#4c5259]" />
  </div>
);

const Taskbar = () => (
  <div className="flex h-[40px] shrink-0 bg-[#060b13]">
    <div className="flex w-[48px] items-center justify-center">
      <svg width="16" height="16" viewBox="0 0 16 16"><path d="M0 2.300l6.500-1v6.200H0zM7.300 1.200L16 0v7.500H7.300zM0 8.400h6.500v6.200L0 13.700zM7.300 8.400H16V16l-8.700-1.200z" fill="#fff" /></svg>
    </div>
    <div className="flex w-[344px] items-center border-t border-[#b0b0b0] bg-[#f1f1f1] pl-[9px]">
      <span className="h-[22px] w-[22px] rounded-full border-[3px] border-black" />
      <Fit w={128} className="ml-[9px] text-[14.500px] leading-[20px] text-[#303030]">Type here to search</Fit>
      <svg className="ml-auto mr-[14px]" width="12" height="17" viewBox="0 0 12 17"><rect x="3" y=".6" width="6" height="11" rx="2" fill="none" stroke="#222" strokeWidth="1.200" /><path d="M.6 7v5q0 2 2 2h6.800q2 0 2-2V7M6 14v2.500M3 16.400h6" fill="none" stroke="#222" strokeWidth="1.200" /></svg>
    </div>
    <div className="flex w-[48px] items-center justify-center">
      <svg width="17" height="16" viewBox="0 0 17 16" fill="none" stroke="#fff" strokeWidth="1.200"><path d="M1 4.500h11v7H1zM1 0v2h11V0M1 16v-2h11v2M15.500 1v14" /><path d="M14 4h3v3h-3z" fill="#fff" stroke="none" /></svg>
    </div>
    <div className="ml-[3px] flex gap-px">
      {apps.map((a) => (
        <div key={a.name} className={`flex h-[40px] w-[48px] flex-col items-center ${a.full ? "bg-[#3a3f46]" : ""}`}>
          <div className="flex h-[38px] items-center pt-[2px]">{a.icon}</div>
          {a.open && <div className={`h-[2px] bg-[#76b9ed] ${a.full ? "w-[48px]" : "w-[40px]"}`} />}
        </div>
      ))}
    </div>
    <Tray />
  </div>
);

export default function App() {
  return (
    <div className="flex h-[768px] w-[1366px] flex-col overflow-hidden font-['Open_Sans','Noto_Sans',sans-serif]">
      <TitleBar />
      <Toolbar />
      <Bookmarks />
      <Page />
      <Taskbar />
    </div>
  );
}
